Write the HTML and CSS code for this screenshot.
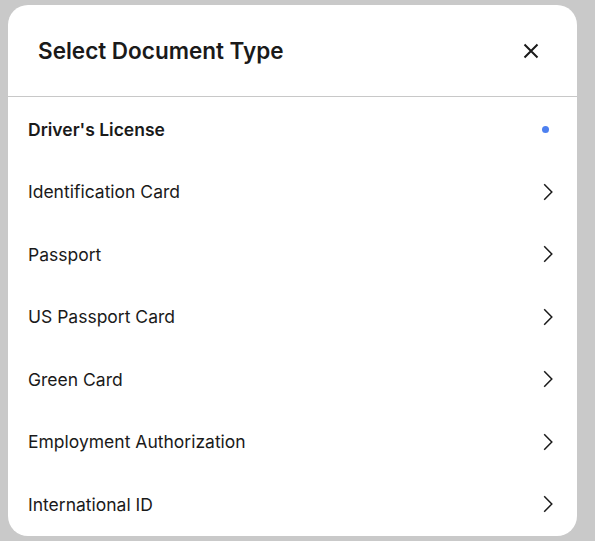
FILE: index.html
```html
<!DOCTYPE html>
<html>
<head>
<meta charset="utf-8">
<link rel="stylesheet" href="styles.css">
</head>
<body>
<div class="sheet">
  <div class="header">
    <h1 class="title">Select Document Type</h1>
    <button class="close" aria-label="Close">
      <svg width="16" height="16" viewBox="0 0 16 16"><path d="M1.5 1.5L14.5 14.5M14.5 1.5L1.5 14.5" stroke="#1a1a1a" stroke-width="2" fill="none"/></svg>
    </button>
  </div>
  <ul class="list">
    <li class="item selected"><span>Driver's License</span><span class="dot"></span></li>
    <li class="item"><span>Identification Card</span><svg class="chev" width="10" height="18" viewBox="0 0 10 18"><path d="M1.2 1.2L8.8 9L1.2 16.8" stroke="#1a1a1a" stroke-width="1.5" fill="none"/></svg></li>
    <li class="item"><span>Passport</span><svg class="chev" width="10" height="18" viewBox="0 0 10 18"><path d="M1.2 1.2L8.8 9L1.2 16.8" stroke="#1a1a1a" stroke-width="1.5" fill="none"/></svg></li>
    <li class="item"><span>US Passport Card</span><svg class="chev" width="10" height="18" viewBox="0 0 10 18"><path d="M1.2 1.2L8.8 9L1.2 16.8" stroke="#1a1a1a" stroke-width="1.5" fill="none"/></svg></li>
    <li class="item"><span>Green Card</span><svg class="chev" width="10" height="18" viewBox="0 0 10 18"><path d="M1.2 1.2L8.8 9L1.2 16.8" stroke="#1a1a1a" stroke-width="1.5" fill="none"/></svg></li>
    <li class="item"><span>Employment Authorization</span><svg class="chev" width="10" height="18" viewBox="0 0 10 18"><path d="M1.2 1.2L8.8 9L1.2 16.8" stroke="#1a1a1a" stroke-width="1.5" fill="none"/></svg></li>
    <li class="item"><span>International ID</span><svg class="chev" width="10" height="18" viewBox="0 0 10 18"><path d="M1.2 1.2L8.8 9L1.2 16.8" stroke="#1a1a1a" stroke-width="1.5" fill="none"/></svg></li>
  </ul>
</div>
</body>
</html>
```

FILE: styles.css
```css
html, body {
  margin: 0;
  padding: 0;
  background: #c9c9c9;
  font-family: Inter, "Noto Sans", sans-serif;
  color: #1a1a1a;
}
body {
  padding: 5px 18px 5px 8px;
}
.sheet {
  background: #fff;
  border-radius: 20px;
  width: 569px;
  height: 531px;
  overflow: hidden;
}
.header {
  height: 91px;
  display: flex;
  align-items: center;
  justify-content: space-between;
  padding: 0 38px 0 30px;
  border-bottom: 1px solid #c8c8c8;
}
.title {
  margin: 0;
  font-size: 22.5px;
  font-weight: 600;
  letter-spacing: 0;
}
.close {
  border: 0;
  background: none;
  padding: 0;
  width: 16px;
  height: 16px;
  display: flex;
}
.list {
  list-style: none;
  margin: 0;
  padding: 1px 0 0;
}
.item {
  height: 62.5px;
  display: flex;
  align-items: center;
  justify-content: space-between;
  padding: 0 24px 0 20px;
  font-size: 17.5px;
}
.selected {
  font-weight: 600;
}
.dot {
  width: 7px;
  height: 7px;
  border-radius: 50%;
  background: #4d80f0;
  margin-right: 4px;
}
.chev {
  display: block;
}
```
